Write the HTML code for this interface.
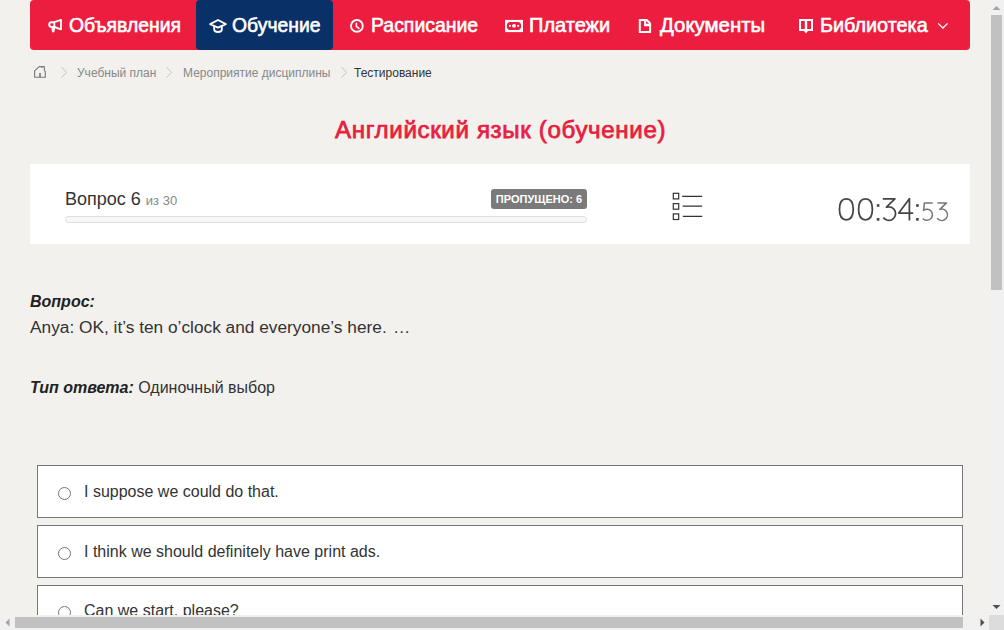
<!DOCTYPE html>
<html><head><meta charset="utf-8">
<style>
html,body{margin:0;padding:0;}
body{width:1004px;height:630px;overflow:hidden;position:relative;background:#f2f1ee;font-family:"Liberation Sans",sans-serif;color:#333;}
.a{position:absolute;white-space:nowrap;}
#nav{left:30px;top:0;width:940px;height:50px;background:#ec1d3e;border-radius:4px;}
#act{left:196px;top:0;width:137px;height:50px;background:#0a3068;border-radius:4px;}
.ni{color:#fff;font-weight:normal;-webkit-text-stroke:0.6px #fff;font-size:20px;line-height:24px;top:13px;transform-origin:0 0;}
.ic{position:absolute;}
.bc{font-size:12px;line-height:14px;top:66px;color:#888;}
.chev{position:absolute;top:67px;}
#title{left:335px;top:119px;font-size:23px;line-height:1;color:#e81e3f;font-weight:normal;-webkit-text-stroke:0.75px #e81e3f;letter-spacing:0.6px;transform:scaleX(1.049);transform-origin:0 0;}
#card{left:30px;top:164px;width:940px;height:80px;background:#fff;}
.opt{position:absolute;left:37px;width:924px;height:51px;border:1px solid #777;background:#fff;}
.radio{position:absolute;left:20px;width:11px;height:11px;border:1px solid #767676;border-radius:50%;background:#fff;}
.ot{position:absolute;left:46px;font-size:16px;line-height:18px;white-space:nowrap;}
</style></head><body>
<div id="nav" class="a"></div>
<div id="act" class="a"></div>

<!-- nav items -->
<div class="a ni" id="n1" style="left:68.6px;transform:scaleX(0.968)">Объявления</div>
<div class="a ni" id="n2" style="left:231.9px;transform:scaleX(0.968)">Обучение</div>
<div class="a ni" id="n3" style="left:371.1px;transform:scaleX(0.972)">Расписание</div>
<div class="a ni" id="n4" style="left:529px;transform:scaleX(1.0)">Платежи</div>
<div class="a ni" id="n5" style="left:660px;transform:scaleX(1.02)">Документы</div>
<div class="a ni" id="n6" style="left:820px;transform:scaleX(0.99)">Библиотека</div>


<!-- nav icons -->
<svg class="a" style="left:45px;top:15px" width="20" height="22" viewBox="0 0 20 22">
 <path d="M9.3 7.2 L16 4.9 V14.3 L9.3 12 Z" fill="none" stroke="#fff" stroke-width="1.9" stroke-linejoin="round"/>
 <path d="M9.3 7.2 H6.6 A2.4 2.4 0 0 0 6.6 12 H9.3" fill="none" stroke="#fff" stroke-width="1.9"/>
 <path d="M6.3 11.5 L6.9 16.5 Q8.1 18.6 9.5 16.5 L10.4 11.5 Z" fill="#fff"/>
</svg>
<svg class="a" style="left:207px;top:15px" width="22" height="22" viewBox="0 0 22 22">
 <path d="M3.2 9.1 L11 5 L18.8 9.1 L11 12.6 Z" fill="none" stroke="#fff" stroke-width="1.9" stroke-linejoin="round"/>
 <path d="M7.2 10.8 V14.6 Q7.2 17 11 17 Q14.8 17 14.8 14.6 V10.8" fill="none" stroke="#fff" stroke-width="1.9"/>
</svg>
<svg class="a" style="left:346px;top:15px" width="22" height="22" viewBox="0 0 22 22">
 <circle cx="10.9" cy="10.9" r="5.9" fill="none" stroke="#fff" stroke-width="1.9"/>
 <path d="M10.4 8.2 V11.3 L12.9 13.4" fill="none" stroke="#fff" stroke-width="1.5" stroke-linecap="round"/>
</svg>
<svg class="a" style="left:502px;top:15px" width="24" height="22" viewBox="0 0 24 22">
 <rect x="3" y="4.9" width="18" height="12.2" fill="#fff"/>
 <path d="M6.9 7 H17 L19 9 V12.9 L17 14.9 H6.9 L4.9 12.9 V9 Z" fill="#ec1d3e"/>
 <rect x="7" y="9.9" width="1.9" height="1.9" fill="#fff"/>
 <rect x="15.2" y="9.9" width="1.9" height="1.9" fill="#fff"/>
 <circle cx="12" cy="10.8" r="1.9" fill="#fff"/>
</svg>
<svg class="a" style="left:635px;top:15px" width="20" height="22" viewBox="0 0 20 22">
 <path d="M3.8 4 H12.2 L16.1 7.9 V18 H3.8 Z M5.8 6 V16 H14.1 V11.2 H9.1 V6 Z" fill="#fff" fill-rule="evenodd"/>
 <path d="M11.1 5.9 V8.8 H14 Z" fill="#ec1d3e"/>
</svg>
<svg class="a" style="left:795px;top:15px" width="22" height="22" viewBox="0 0 22 22">
 <path d="M5 5 H17 V14.9 H12.5 L11 16.8 L9.5 14.9 H5 Z" fill="none" stroke="#fff" stroke-width="2" stroke-linejoin="miter"/>
 <path d="M11 5 V15.5" stroke="#fff" stroke-width="2.4"/>
</svg>
<svg class="a" style="left:933px;top:18px" width="20" height="16" viewBox="0 0 20 16">
 <path d="M5.2 5.4 L9.9 10 L14.6 5.4" fill="none" stroke="#fff" stroke-width="1.3"/>
</svg>

<!-- breadcrumb icons -->
<svg class="a" style="left:30px;top:62px" width="20" height="20" viewBox="0 0 20 20">
 <path d="M4.6 15.3 V8.8 L9.2 4.6 H11.2 L11.8 5.4 L12.4 4.6 H14.3 V8.6 L15.3 9.4 V15.3 Z" fill="none" stroke="#777" stroke-width="1.1" stroke-linejoin="round"/>
 <path d="M10 11 V15.3" stroke="#777" stroke-width="1.6"/>
</svg>
<svg class="a" style="left:56px;top:62px" width="16" height="20" viewBox="0 0 16 20"><path d="M5.4 5.1 L10.6 10.4 L5.4 15.6" fill="none" stroke="#c4c4c4" stroke-width="1"/></svg>
<svg class="a" style="left:161px;top:62px" width="16" height="20" viewBox="0 0 16 20"><path d="M5.4 5.1 L10.6 10.4 L5.4 15.6" fill="none" stroke="#c4c4c4" stroke-width="1"/></svg>
<svg class="a" style="left:336px;top:62px" width="16" height="20" viewBox="0 0 16 20"><path d="M5.4 5.1 L10.6 10.4 L5.4 15.6" fill="none" stroke="#c4c4c4" stroke-width="1"/></svg>



<!-- breadcrumb -->
<div class="a bc" style="left:77px">Учебный план</div>
<div class="a bc" style="left:183px">Мероприятие дисциплины</div>
<div class="a bc" style="left:354px;color:#333">Тестирование</div>

<div id="title" class="a">Английский язык (обучение)</div>

<div id="card" class="a"></div>
<!-- list icon -->
<svg class="a" style="left:660px;top:180px" width="60" height="50" viewBox="0 0 60 50">
 <rect x="13.3" y="13.3" width="5.4" height="5.6" fill="none" stroke="#333" stroke-width="1.2"/>
 <rect x="13.3" y="23.6" width="5.4" height="5.6" fill="none" stroke="#333" stroke-width="1.2"/>
 <rect x="13.3" y="33.9" width="5.4" height="5.6" fill="none" stroke="#333" stroke-width="1.2"/>
 <path d="M22.2 16.4 H42.2 M22.6 26.2 H42.2 M22.8 36.3 H42.2" stroke="#333" stroke-width="1.3"/>
</svg>
<div class="a" style="left:65px;top:189px;font-size:18px;line-height:20px;color:#333">Вопрос 6 <span style="font-size:13px;color:#888">из 30</span></div>
<div class="a" style="left:65px;top:216px;width:520px;height:5px;border:1px solid #ddd;border-radius:4px;background:#f7f7f7"></div>
<div class="a" style="left:491px;top:189px;width:96px;height:20px;background:#7a7a7a;border-radius:3px;color:#fff;font-weight:bold;font-size:11px;line-height:20px;text-align:center">ПРОПУЩЕНО: 6</div>
<svg class="a" style="left:830px;top:190px" width="130" height="40" viewBox="830 190 130 40">
 <g fill="none" stroke="#444" stroke-width="1.75" stroke-linecap="butt" stroke-linejoin="round">
  <path d="M846.35 198.85 C850.90 198.85 853.25 202.84 853.25 209.35 C853.25 215.86 850.90 219.85 846.35 219.85 C841.80 219.85 839.45 215.86 839.45 209.35 C839.45 202.84 841.80 198.85 846.35 198.85 Z"/>
  <path d="M865.50 198.85 C870.05 198.85 872.40 202.84 872.40 209.35 C872.40 215.86 870.05 219.85 865.50 219.85 C860.95 219.85 858.60 215.86 858.60 209.35 C858.60 202.84 860.95 198.85 865.50 198.85 Z"/>
  <path d="M882.8 198.9 H894.9 L886.4 207.2 A6.8 6.8 0 1 1 883.3 217.6"/>
  <path d="M913.2 213 H898.8 L909.4 198.7 V220.6"/>
 </g>
 <g fill="#444">
  <rect x="876.8" y="204.2" width="2.6" height="2.6"/>
  <rect x="876.8" y="218" width="2.6" height="2.7"/>
  <rect x="916.1" y="204.2" width="2.6" height="2.6"/>
  <rect x="916.1" y="218" width="2.6" height="2.7"/>
 </g>
 <g fill="none" stroke="#777" stroke-width="1.5" stroke-linejoin="round">
  <path d="M932.7 202.9 H924.4 L923.6 210.4 A5.5 5.5 0 1 1 922.8 218.4"/>
  <path d="M937.4 202.9 H946.5 L939.8 209.4 A5.7 5.7 0 1 1 937.2 218.2"/>
 </g>
</svg>

<div class="a" style="left:30px;top:293px;font-size:16px;line-height:18px;font-weight:bold;font-style:italic;color:#222">Вопрос:</div>
<div class="a" style="left:30px;top:317px;font-size:17.3px;line-height:20px">Anya: OK, it’s ten o’clock and everyone’s here.<span style="margin-left:1.5px"> …</span></div>
<div class="a" style="left:30px;top:379px;font-size:16px;line-height:18px"><b style="color:#222"><i>Тип ответа:</i></b> Одиночный выбор</div>

<div class="opt" style="top:465px"><div class="radio" style="top:21px"></div><div class="ot" style="top:17px">I suppose we could do that.</div></div>
<div class="opt" style="top:525px"><div class="radio" style="top:21px"></div><div class="ot" style="top:17px">I think we should definitely have print ads.</div></div>
<div class="opt" style="top:585px"><div class="radio" style="top:20px"></div><div class="ot" style="top:16px">Can we start, please?</div></div>

<!-- scrollbars -->
<div class="a" style="left:989px;top:0;width:15px;height:615px;background:#f1f1f1"></div>
<div class="a" style="left:991px;top:15px;width:11px;height:275px;background:#c1c1c1"></div>
<div class="a" style="left:0;top:615px;width:989px;height:15px;background:#f1f1f1"></div>
<div class="a" style="left:15px;top:617px;width:948px;height:11px;background:#c1c1c1"></div>
<div class="a" style="left:989px;top:615px;width:15px;height:15px;background:#dcdcdc"></div>
<svg class="a" style="left:989px;top:0" width="15" height="15"><path d="M3.5 10 L7.5 6 L11.5 10 Z" fill="#a3a3a3"/></svg>
<svg class="a" style="left:989px;top:600px" width="15" height="15"><path d="M3.5 5 L7.5 9 L11.5 5 Z" fill="#505050"/></svg>
<svg class="a" style="left:0;top:615px" width="15" height="15"><path d="M9.5 3.5 L5.5 7.5 L9.5 11.5 Z" fill="#a3a3a3"/></svg>
<svg class="a" style="left:975px;top:615px" width="15" height="15"><path d="M5.5 3.5 L9.5 7.5 L5.5 11.5 Z" fill="#505050"/></svg>
</body></html>
